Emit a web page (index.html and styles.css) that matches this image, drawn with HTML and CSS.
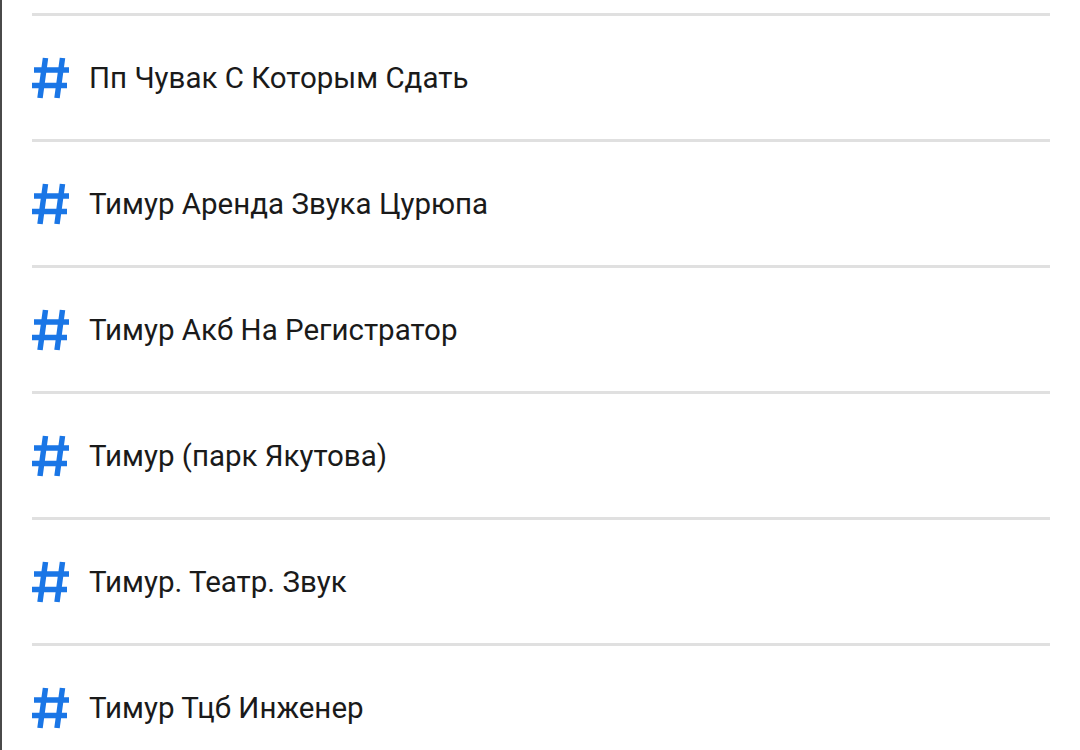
FILE: index.html
```html
<!DOCTYPE html>
<html lang="ru">

<head>
    <meta charset="UTF-8">
    <title>Теги</title>
    <link rel="stylesheet" href="styles.css">
</head>

<body>
    <div id="panel">
        <ul id="tag-list">
            <li class="tag-row">
                <svg class="tag-icon" viewBox="0 0 38 42"><path d="M13.5 1 L8 41 M30.5 1 L25 41 M2 13 H37 M0 28.5 H35" /></svg>
                <span class="tag-name">Пп Чувак С Которым Сдать</span>
            </li>
            <li class="tag-row">
                <svg class="tag-icon" viewBox="0 0 38 42"><path d="M13.5 1 L8 41 M30.5 1 L25 41 M2 13 H37 M0 28.5 H35" /></svg>
                <span class="tag-name">Тимур Аренда Звука Цурюпа</span>
            </li>
            <li class="tag-row">
                <svg class="tag-icon" viewBox="0 0 38 42"><path d="M13.5 1 L8 41 M30.5 1 L25 41 M2 13 H37 M0 28.5 H35" /></svg>
                <span class="tag-name">Тимур Акб На Регистратор</span>
            </li>
            <li class="tag-row">
                <svg class="tag-icon" viewBox="0 0 38 42"><path d="M13.5 1 L8 41 M30.5 1 L25 41 M2 13 H37 M0 28.5 H35" /></svg>
                <span class="tag-name">Тимур (парк Якутова)</span>
            </li>
            <li class="tag-row">
                <svg class="tag-icon" viewBox="0 0 38 42"><path d="M13.5 1 L8 41 M30.5 1 L25 41 M2 13 H37 M0 28.5 H35" /></svg>
                <span class="tag-name">Тимур. Театр. Звук</span>
            </li>
            <li class="tag-row">
                <svg class="tag-icon" viewBox="0 0 38 42"><path d="M13.5 1 L8 41 M30.5 1 L25 41 M2 13 H37 M0 28.5 H35" /></svg>
                <span class="tag-name">Тимур Тцб Инженер</span>
            </li>
        </ul>
    </div>
</body>

</html>
```

FILE: styles.css
```css
body {
    margin: 0;
    background-color: #fff;
    font-family: Roboto, "Noto Sans", sans-serif;
    height: 100vh;
    overflow: hidden;
}

#panel {
    border-left: 2px solid #4a4a4a;
    height: 100%;
    padding: 13px 30px 0 30px;
}

#tag-list {
    list-style: none;
    margin: 0;
    padding: 0;
}

.tag-row {
    display: flex;
    align-items: center;
    gap: 19px;
    height: 123px;
    border-top: 3px solid #e0e0e0;
}

.tag-icon {
    width: 38px;
    height: 42px;
    flex-shrink: 0;
}

.tag-icon path {
    fill: none;
    stroke: #1a76e6;
    stroke-width: 5.5;
}

.tag-name {
    font-size: 29.5px;
    color: #1a1a1a;
}
```
